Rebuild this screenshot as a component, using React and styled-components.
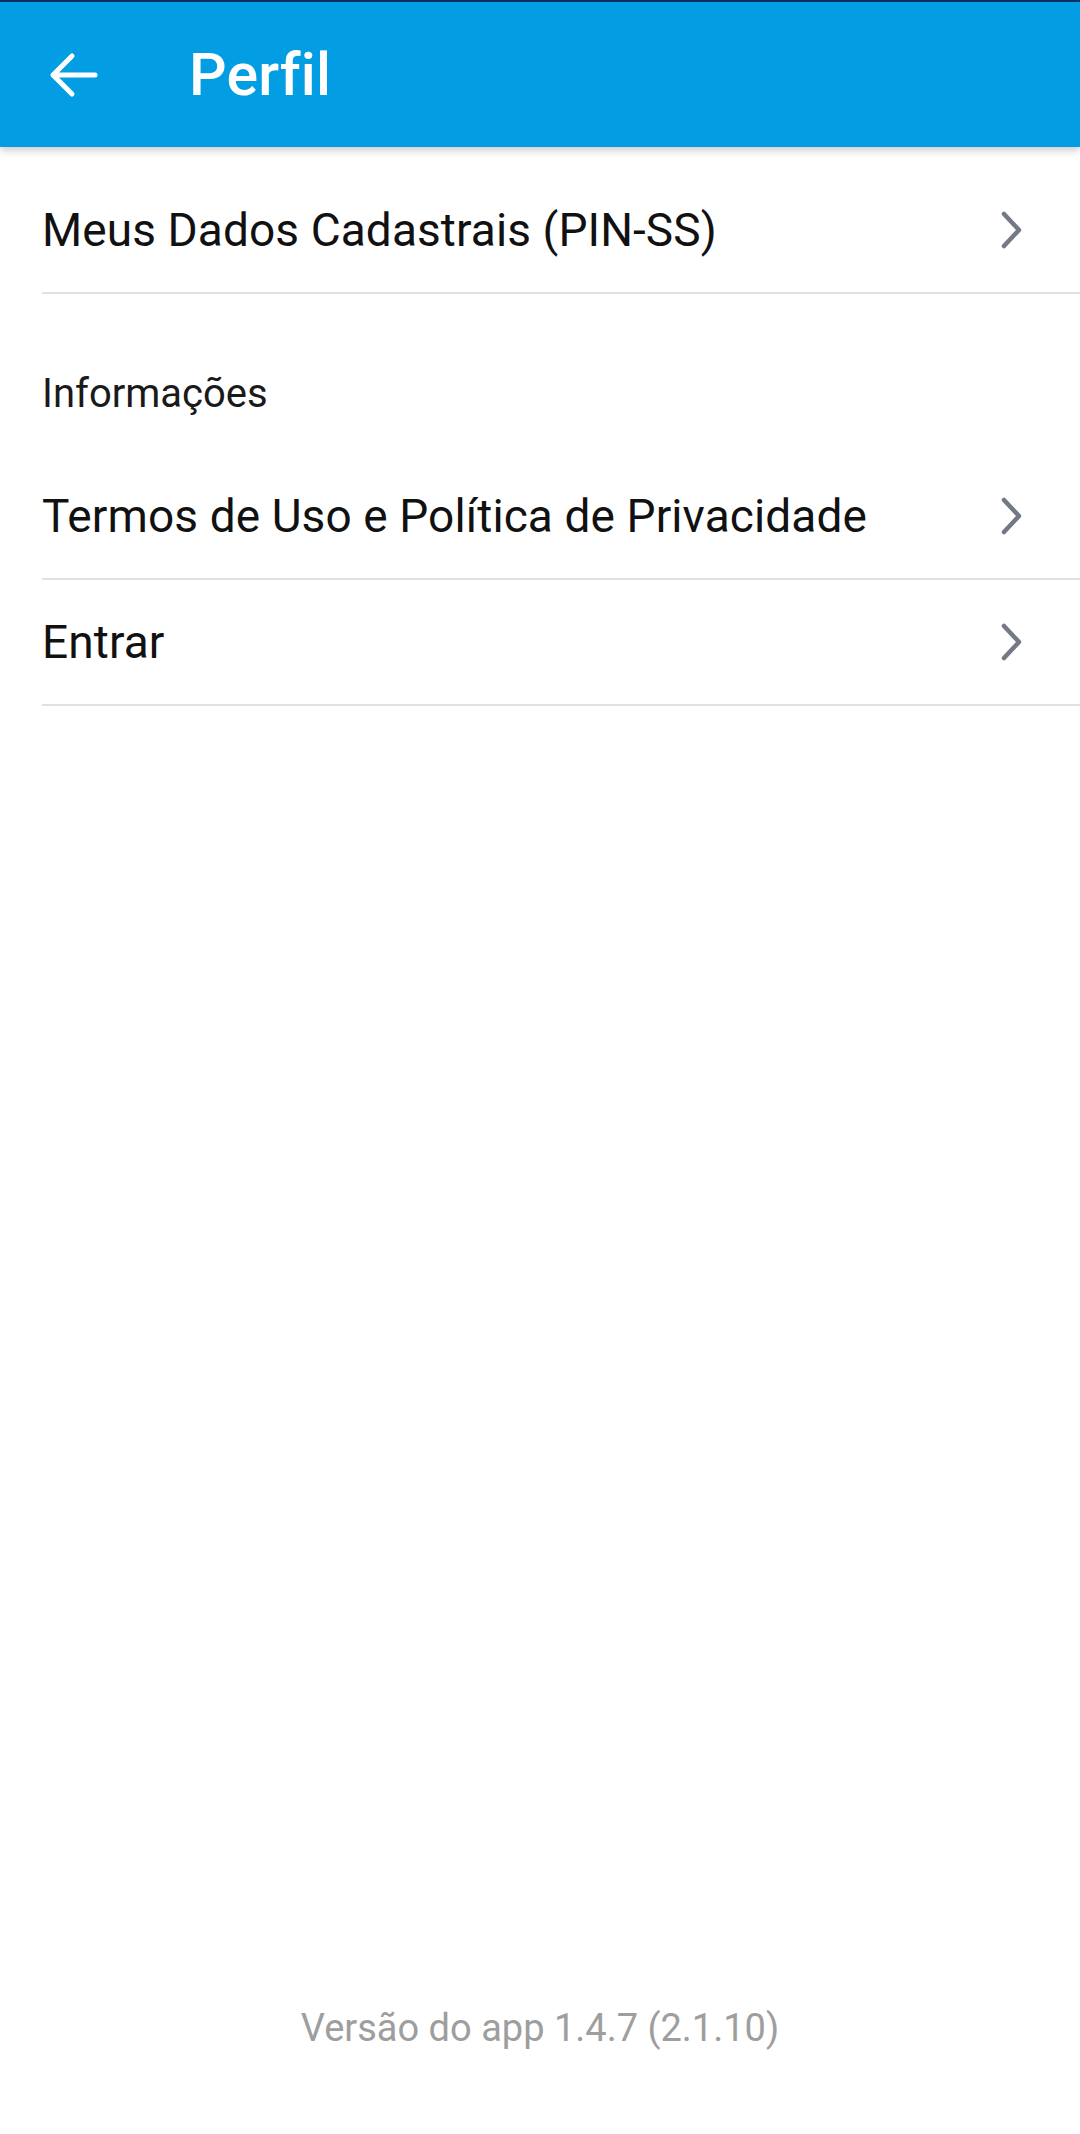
import React from 'react';
import styled, { createGlobalStyle } from 'styled-components';

const GlobalStyle = createGlobalStyle`
  html, body {
    margin: 0;
    padding: 0;
    background: #ffffff;
  }
  body {
    font-family: Roboto, "Noto Sans", "Liberation Sans", sans-serif;
    -webkit-font-smoothing: antialiased;
  }
`;

const Screen = styled.div`
  display: flex;
  flex-direction: column;
  min-height: 2134px;
  background: #ffffff;
`;

const AppBar = styled.header`
  display: flex;
  align-items: center;
  height: 145px;
  border-top: 2px solid #0c2f63;
  background: #039de3;
  box-shadow: 0 3px 8px rgba(0, 0, 0, 0.22);
  position: relative;
  z-index: 1;
`;

const BackButton = styled.button`
  display: flex;
  align-items: center;
  justify-content: center;
  width: 50px;
  height: 50px;
  margin-left: 48px;
  padding: 0;
  border: none;
  background: none;
  cursor: pointer;
`;

const Title = styled.h1`
  margin: 0 0 0 91px;
  font-size: 59px;
  font-weight: 500;
  color: #ffffff;
  letter-spacing: 0.2px;
`;

const List = styled.div`
  display: flex;
  flex-direction: column;
  padding-top: 21px;
`;

const Row = styled.div`
  display: flex;
  align-items: center;
  justify-content: space-between;
  height: 124px;
  margin-left: 42px;
  padding-right: 57px;
  border-bottom: 2px solid #e0e0e0;
  cursor: pointer;
`;

const RowLabel = styled.span`
  font-size: 46px;
  color: #111111;
  letter-spacing: 0.1px;
`;

const SectionTitle = styled.div`
  padding: 77px 0 37px 42px;
  font-size: 40px;
  line-height: 46px;
  color: #1a1a1a;
`;

const Footer = styled.footer`
  margin-top: auto;
  padding-bottom: 83px;
  text-align: center;
  font-size: 38px;
  line-height: 45px;
  color: #9e9e9e;
`;

const ArrowBack = () => (
  <svg width="50" height="46" viewBox="0 0 50 46" fill="none">
    <path
      d="M47 23H5M24 4L5 23l19 19"
      stroke="#ffffff"
      strokeWidth="5"
      strokeLinecap="round"
      strokeLinejoin="round"
    />
  </svg>
);

const Chevron = () => (
  <svg width="22" height="38" viewBox="0 0 22 38" fill="none">
    <path
      d="M3 3l15 16L3 35"
      stroke="#737a84"
      strokeWidth="4.5"
      strokeLinecap="round"
      strokeLinejoin="round"
    />
  </svg>
);

function MenuRow({ label }) {
  return (
    <Row>
      <RowLabel>{label}</RowLabel>
      <Chevron />
    </Row>
  );
}

export default function App() {
  return (
    <>
      <GlobalStyle />
      <Screen>
        <AppBar>
          <BackButton aria-label="Voltar">
            <ArrowBack />
          </BackButton>
          <Title>Perfil</Title>
        </AppBar>
        <List>
          <MenuRow label="Meus Dados Cadastrais (PIN-SS)" />
          <SectionTitle>Informações</SectionTitle>
          <MenuRow label="Termos de Uso e Política de Privacidade" />
          <MenuRow label="Entrar" />
        </List>
        <Footer>Versão do app 1.4.7 (2.1.10)</Footer>
      </Screen>
    </>
  );
}
